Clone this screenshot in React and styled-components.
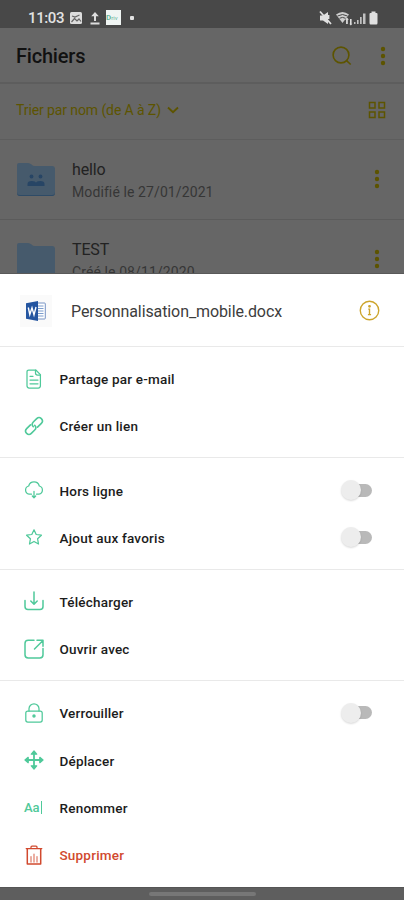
import React, { useState } from "react";
import styled, { createGlobalStyle } from "styled-components";

const GREEN = "#4fc99a";
const RED = "#d1492e";

const GlobalStyle = createGlobalStyle`
  * {
    box-sizing: border-box;
  }
  body {
    margin: 0;
    background: #666;
    font-family: Roboto, "Liberation Sans", sans-serif;
  }
`;

//icons of the bottom sheet, all drawn on a 20px grid
const icons = {
  mail: (
    <>
      <path d="M4.800 1h7l4.600 4.600v11.200q0 2.200-2.200 2.200H5.200Q3 19 3 16.800V2.800Q3 1 4.800 1" />
      <path d="M11.500 1v3q0 2 2 2h3M6 7.300h3M6 11h8M6 14.800h8" />
    </>
  ),
  link: (
    <g transform="rotate(-45 10 10)" strokeWidth="1.600">
      <path d="M8.300 6.700H2.900a3.300 3.300 0 0 0 0 6.600h4.800a3.300 3.300 0 0 0 3.300-3.300" />
      <path d="M11.700 13.300h5.400a3.300 3.300 0 0 0 0-6.600h-4.800A3.300 3.300 0 0 0 9 10" />
    </g>
  ),
  cloud: (
    <>
      <path d="M7.500 14.200H5.100A4.200 4.200 0 0 1 4.700 6a5.500 5.500 0 0 1 10.600 0 4.200 4.200 0 0 1-.4 8.200h-2.400" />
      <path d="M10 11.300v6.300M8.300 16l1.700 1.800 1.700-1.800" />
    </>
  ),
  star: (
    <path d="M10 2.800l2.200 4.700 5.200.7-3.800 3.600.9 5.200L10 14.500 5.500 17l.9-5.200L2.600 8.200l5.200-.7z" />
  ),
  download: (
    <g strokeWidth="1.500">
      <path d="M1 9.500v6q0 3 3 3h12q3 0 3-3v-6" />
      <path d="M10 1v12M6.800 10l3.200 3.300 3.200-3.300" />
    </g>
  ),
  open: (
    <g strokeWidth="1.500">
      <path d="M10 1.300H4.200Q1 1.300 1 4.500v11.300Q1 19 4.200 19h11.600q3.200 0 3.200-3.200V9.500" />
      <path d="M10.500 10l8-8M13 1.300h6v6" />
    </g>
  ),
  lock: (
    <>
      <rect x="1.800" y="8" width="16.400" height="11" rx="2" />
      <path d="M5 8V5.800a5 5 0 0 1 10 0V8" />
      <circle cx="10" cy="13" r="1.100" fill="currentColor" />
    </>
  ),
  move: (
    <>
      <path d="M10 3v14M3 10h14" strokeWidth="1.800" />
      <path
        d="M10 1L7.300 4.200h5.400zM10 19l-2.700-3.200h5.400zM1 10l3.200-2.700v5.400zM19 10l-3.200-2.700v5.400z"
        fill="currentColor"
      />
    </>
  ),
  trash: (
    <>
      <path d="M2.200 3.500h15.600M7 3.300V2q0-1 1-1h4q1 0 1 1v1.300" />
      <path d="M3.300 3.700V19h13.400V3.700" strokeWidth="1.500" />
      <path d="M7 17v-5.500M10 17V9M13 17v-5.500" opacity=".7" />
    </>
  ),
};

const groups = [
  [
    { icon: "mail", label: "Partage par e-mail", spacing: 0.2 },
    { icon: "link", label: "Créer un lien", spacing: 0.2 },
  ],
  [
    { icon: "cloud", label: "Hors ligne", spacing: 0.2, toggle: true },
    { icon: "star", label: "Ajout aux favoris", spacing: 0.22, toggle: true },
  ],
  [
    { icon: "download", label: "Télécharger", spacing: 0.2 },
    { icon: "open", label: "Ouvrir avec", spacing: 0.2 },
  ],
  [
    { icon: "lock", label: "Verrouiller", spacing: 0.15, toggle: true },
    { icon: "move", label: "Déplacer", spacing: 0.2 },
    { icon: "rename", label: "Renommer", spacing: 0.22 },
    { icon: "trash", label: "Supprimer", spacing: 0.2, danger: true },
  ],
];

const Dots = () => (
  <svg width="6" height="20" viewBox="0 0 6 20" fill="#5d5400">
    <circle cx="3" cy="3" r="2.200" />
    <circle cx="3" cy="10" r="2.200" />
    <circle cx="3" cy="17" r="2.200" />
  </svg>
);

const Folder = ({ shared }) => (
  <svg width="40" height="36" viewBox="0 0 40 36">
    <path
      d="M1 4q0-2 2-2h9q2 0 3.500 1.500T19 5h17q3 0 3 3v24q0 3-3 3H4q-3 0-3-3z"
      fill="#465a6c"
    />
    <path d="M1 31q0 3 3 3h32q3 0 3-3v1q0 3-3 3H4q-3 0-3-3z" fill="#2e4b67" />
    {shared && (
      <g fill="#274565">
        <circle cx="15.500" cy="15.500" r="1.900" />
        <circle cx="24.500" cy="15.500" r="1.900" />
        <path d="M11.500 25v-2q0-3 4.200-3t4.300 2q0-2 4.300-2t4.200 3v2z" />
      </g>
    )}
  </svg>
);

//one line of the sheet, with a switch at the end when it can be toggled
const ActionItem = ({ item }) => {
  const [on, setOn] = useState(false);

  return (
    <Action $danger={item.danger}>
      <IconBox>
        {item.icon === "rename" ? (
          <Rename>Aa</Rename>
        ) : (
          <LineIcon viewBox="0 0 20 20">{icons[item.icon]}</LineIcon>
        )}
      </IconBox>
      <ActionLabel $spacing={item.spacing}>{item.label}</ActionLabel>
      {item.toggle && (
        <Switch $on={on} onClick={() => setOn(!on)} aria-label={item.label}>
          <Knob />
        </Switch>
      )}
    </Action>
  );
};

const App = () => {
  return (
    <Screen>
      <GlobalStyle />
      <Backdrop>
        <StatusBar>
          <Clock>11:03</Clock>
          <svg width="14" height="14" viewBox="0 0 14 14">
            <rect x="1" y="1" width="12" height="12" rx="1.500" fill="#ddd" />
            <path d="M2.500 11l3-3.500L8 10l2-2 2 2.500M3 5l3 1 4.500-2" fill="none" stroke="#666" strokeWidth="1.200" />
          </svg>
          <UploadIcon viewBox="0 0 10 14">
            <path d="M5 1L1.200 5.200H4V10h2V5.200h2.800zM.5 11.500h9v2h-9z" fill="#ddd" />
          </UploadIcon>
          <AppBadge>
            <b>D</b>riv
          </AppBadge>
          <Dot />
          <Spacer />
          <StatusIcons viewBox="0 0 62 16">
            <g fill="#e0e0e0">
              <path d="M1 5.500h3L9 2v12l-5-3.500H1z" />
              <path d="M17 4.600Q23.500-.4 30 4.600L23.500 13z" opacity=".88" />
              <path d="M26 9.500l2-2 1.800 2.200h-1V14h-1.700V9.500zM30.300 13.800h3l-1.500 1.800zM31 9h1.600v5H31z" />
              <path d="M35 14v-2h1.500v2zM38 14v-4h1.600v4zM41 14V7h1.700v7zM44 14V3.500h2.500V14z" opacity=".8" />
              <path d="M50.500 4q0-1 1-1h1V1.500h4V3h1q1 0 1 1v9q0 1.500-1.200 1.500h-5.600q-1.200 0-1.200-1.500z" />
            </g>
            <path d="M1 1.500l11 12.500M9.500 5v4" stroke="#e0e0e0" strokeWidth="1.800" fill="none" />
            <path d="M18.500 6q5-3 10 0M20.500 8.300q3-1.800 6 0" stroke="#484848" strokeWidth="1" fill="none" />
          </StatusIcons>
        </StatusBar>
        <AppBar>
          <Title>Fichiers</Title>
          <SearchIcon viewBox="0 0 20 20">
            <circle cx="9" cy="9" r="7.900" />
            <path d="M14.300 14.300l4.400 4.200" />
          </SearchIcon>
          <Dots />
        </AppBar>
        <SortBar>
          <SortLabel>Trier par nom (de A à Z)</SortLabel>
          <Chevron viewBox="0 0 12 8">
            <path d="M1 1.500l5 4.700 5-4.700" />
          </Chevron>
          <Spacer />
          <GridIcon viewBox="0 0 18 18">
            <path d="M1.500 1.500h5.500v5.500H1.500zM11 1.500h5.500v5.500H11zM1.500 11h5.500v5.500H1.500zM11 11h5.500v5.500H11z" />
          </GridIcon>
        </SortBar>
        <FileRow>
          <Folder shared />
          <FileText>
            <FileName>hello</FileName>
            <FileDate>Modifié le 27/01/2021</FileDate>
          </FileText>
          <Dots />
        </FileRow>
        <FileRow>
          <Folder />
          <FileText>
            <FileName>TEST</FileName>
            <FileDate>Créé le 08/11/2020</FileDate>
          </FileText>
          <Dots />
        </FileRow>
      </Backdrop>
      <Sheet>
        <SheetHeader>
          <DocBox>
            <svg width="20" height="20" viewBox="0 0 20 20">
              <rect x="10" y="2" width="9.300" height="16" rx=".8" fill="#fff" stroke="#5579b5" strokeWidth=".8" />
              <path d="M12 5h5.500M12 7.500h5.500M12 10h5.500M12 12.500h5.500M12 15h5.500" stroke="#7c9dcd" strokeWidth="1" />
              <path d="M0 2.300L12 0v20L0 17.700z" fill="#2455a0" />
              <path d="M2.300 6.500l1.500 7 2.200-6.700 2 7L10 6" fill="none" stroke="#fff" strokeWidth="1.400" />
            </svg>
          </DocBox>
          <DocName>Personnalisation_mobile.docx</DocName>
          <InfoIcon viewBox="0 0 20 20">
            <circle cx="10" cy="10" r="8.800" />
            <path d="M8.800 8.700H10v5M8.500 13.900h3" />
            <circle cx="10" cy="6" r=".7" fill="#cda52d" />
          </InfoIcon>
        </SheetHeader>
        {groups.map((items, index) => (
          <Group key={index}>
            {items.map((item) => (
              <ActionItem key={item.label} item={item} />
            ))}
          </Group>
        ))}
      </Sheet>
      <NavBar>
        <Handle />
      </NavBar>
    </Screen>
  );
};

const Screen = styled.div`
  display: flex;
  flex-direction: column;
  width: 404px;
  height: 900px;
  overflow: hidden;
`;

//dimmed file list behind the sheet
const Backdrop = styled.div`
  flex: none;
  height: 274px;
  overflow: hidden;
  background: #666;
  border-bottom: 1px solid #595959;
`;

const StatusBar = styled.div`
  display: flex;
  align-items: center;
  height: 28px;
  padding: 7px 23px 0 28px;
  background: #484848;
`;

const Clock = styled.span`
  width: 41px;
  font-size: 15px;
  line-height: 20px;
  font-weight: 500;
  letter-spacing: -0.4px;
  color: #e2e2e2;
`;

const UploadIcon = styled.svg`
  width: 10px;
  height: 14px;
  margin: 0 6px 0 7px;
`;

const AppBadge = styled.span`
  width: 15px;
  height: 15px;
  line-height: 15px;
  font-size: 6px;
  color: #68b69b;
  background: #f0f5f3;
  overflow: hidden;
  b {
    font-size: 8px;
  }
`;

const Dot = styled.span`
  width: 4px;
  height: 4px;
  margin-left: 9px;
  border-radius: 1px;
  background: #e2e2e2;
`;

const Spacer = styled.div`
  flex: 1;
`;

const StatusIcons = styled.svg`
  width: 62px;
  height: 16px;
`;

const AppBar = styled.div`
  display: flex;
  align-items: center;
  height: 56px;
  padding: 2px 18px 0 16px;
  border-bottom: 2px solid #5d5d5d;
`;

const Title = styled.h1`
  flex: 1;
  margin: 0;
  font-size: 20px;
  font-weight: 500;
  letter-spacing: -0.2px;
  color: #111;
`;

const SearchIcon = styled.svg`
  width: 20px;
  height: 20px;
  margin-right: 28px;
  fill: none;
  stroke: #5d5400;
  stroke-width: 1.6;
`;

const SortBar = styled.div`
  display: flex;
  align-items: center;
  height: 56px;
  padding: 0 18px 3px 16px;
  border-bottom: 1px solid #5d5d5d;
`;

const SortLabel = styled.span`
  font-size: 14px;
  letter-spacing: -0.1px;
  color: #5d5400;
`;

const Chevron = styled.svg`
  width: 12px;
  height: 8px;
  margin-left: 6px;
  fill: none;
  stroke: #5d5400;
  stroke-width: 1.9;
`;

const GridIcon = styled.svg`
  width: 18px;
  height: 18px;
  fill: none;
  stroke: #5d5400;
  stroke-width: 1.5;
`;

const FileRow = styled.div`
  display: flex;
  align-items: center;
  height: 80px;
  padding: 0 24px 1px 16px;
  border-bottom: 1px solid #5b5b5b;
`;

const FileText = styled.div`
  flex: 1;
  display: flex;
  flex-direction: column;
  gap: 2px;
  padding: 3px 0 0 16px;
`;

const FileName = styled.span`
  font-size: 16px;
  line-height: 21px;
  letter-spacing: -0.15px;
  color: #222;
`;

const FileDate = styled.span`
  font-size: 14px;
  line-height: 20px;
  letter-spacing: 0.1px;
  color: #363636;
`;

const Sheet = styled.div`
  flex: none;
  height: 613px;
  background: #fff;
`;

const SheetHeader = styled.div`
  display: flex;
  align-items: center;
  height: 72px;
  padding: 1px 24px 0 20px;
`;

const DocBox = styled.div`
  display: flex;
  align-items: center;
  justify-content: center;
  width: 32px;
  height: 32px;
  background: #fafafa;
`;

const DocName = styled.span`
  flex: 1;
  padding: 1px 0 0 19px;
  font-size: 16px;
  letter-spacing: -0.1px;
  color: #3d3d3d;
`;

const InfoIcon = styled.svg`
  width: 21px;
  height: 21px;
  fill: none;
  stroke: #cda52d;
  stroke-width: 1.3;
`;

const Group = styled.div`
  height: 111.4px;
  padding: 8px 0 0;
  border-top: 1.5px solid #e9e9e9;
  &:last-child {
    height: auto;
  }
`;

const Action = styled.div`
  display: flex;
  align-items: center;
  height: 47.3px;
  padding: 0 32px 0 24px;
  color: ${(props) => (props.$danger ? RED : "#1c1c1c")};
  & > span {
    color: ${(props) => (props.$danger ? RED : GREEN)};
  }
`;

const IconBox = styled.span`
  display: flex;
  width: 35.5px;
`;

const LineIcon = styled.svg`
  width: 20px;
  height: 20px;
  fill: none;
  stroke: currentColor;
  stroke-width: 1.25;
  stroke-linecap: round;
  stroke-linejoin: round;
`;

const Rename = styled.span`
  padding-right: 1px;
  border-right: 1px solid ${GREEN};
  font-size: 13px;
  line-height: 13px;
  font-weight: 500;
`;

const ActionLabel = styled.div`
  flex: 1;
  padding-top: 1px;
  font-size: 13.5px;
  font-weight: 500;
  letter-spacing: ${(props) => props.$spacing}px;
`;

const Switch = styled.button`
  display: flex;
  align-items: center;
  justify-content: ${(props) => (props.$on ? "flex-end" : "flex-start")};
  width: 29px;
  height: 13px;
  padding: 0;
  border: 0;
  border-radius: 7px;
  background: ${(props) => (props.$on ? "#a7e4cc" : "#b9b9b9")};
`;

const Knob = styled.span`
  width: 20px;
  height: 20px;
  margin: 0 -2px;
  border-radius: 50%;
  background: #ededed;
  box-shadow: 0 1px 2px rgba(0, 0, 0, 0.15);
`;

const NavBar = styled.div`
  flex: 1;
  display: flex;
  align-items: center;
  justify-content: center;
  border-top: 1px solid #555;
  background: #5e5e5e;
`;

const Handle = styled.div`
  width: 107px;
  height: 4px;
  border-radius: 2px;
  background: #777;
`;

export default App;
